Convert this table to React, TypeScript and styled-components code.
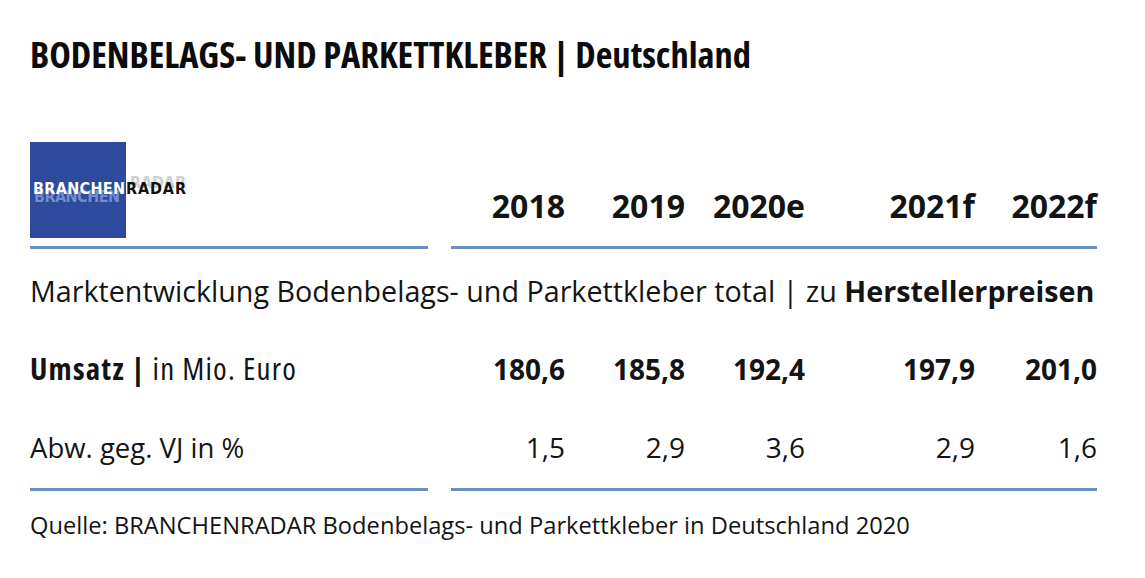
import styled, { createGlobalStyle } from "styled-components";

const GlobalStyle = createGlobalStyle`
  html, body {
    margin: 0;
    padding: 0;
    background: #fff;
  }
  body {
    font-family: "Open Sans", "Liberation Sans", sans-serif;
    font-stretch: condensed;
    color: #141414;
  }
`;

const years = ["2018", "2019", "2020e", "2021f", "2022f"];
const umsatz = ["180,6", "185,8", "192,4", "197,9", "201,0"];
const abw = ["1,5", "2,9", "3,6", "2,9", "1,6"];

const Page = styled.div`
  width: 1145px;
  height: 578px;
  padding: 32px 0 0 30px;
  box-sizing: border-box;
`;

const Title = styled.h1`
  margin: 0;
  font-size: 36.5px;
  font-weight: 700;
  line-height: 44px;
  color: #0c0c0c;
`;

const Table = styled.div`
  margin-top: 66px;
  width: 1070px;
  display: grid;
  grid-template-columns: 415px 120px 120px 120px 170px 122px;
  align-items: baseline;
`;

const LogoCell = styled.div`
  height: 96px;
  align-self: start;
`;

const HeadCell = styled.div`
  align-self: end;
  text-align: right;
  font-size: 32px;
  font-weight: 700;
  font-stretch: normal;
  line-height: 40px;
  padding-bottom: 12px;
`;

const Cell = styled.div<{ $bold?: boolean }>`
  text-align: right;
  font-size: 28px;
  font-weight: ${(p) => (p.$bold ? 700 : 400)};
  font-stretch: normal;
  line-height: 40px;
`;

const Label = styled.div<{ $size: number; $stretch: string; $spacing: number }>`
  font-size: ${(p) => p.$size}px;
  font-stretch: ${(p) => p.$stretch};
  letter-spacing: ${(p) => p.$spacing}px;
  line-height: 40px;
  white-space: nowrap;
  b {
    font-weight: 700;
  }
`;

const Wide = styled.div`
  grid-column: 1 / -1;
  font-size: 28.7px;
  font-stretch: normal;
  line-height: 40px;
  padding-top: 22px;
  white-space: nowrap;
  b {
    font-weight: 700;
  }
`;

const Rule = styled.div<{ $top: number }>`
  grid-column: 1 / -1;
  align-self: start;
  display: flex;
  gap: 23px;
  padding-top: ${(p) => p.$top}px;
`;

const RuleSeg = styled.div<{ $w?: number }>`
  height: 3px;
  background: #6b8fc2;
  flex: ${(p) => (p.$w ? `0 0 ${p.$w}px` : "1")};
`;

const RowGap = styled.div<{ $h: number }>`
  grid-column: 1 / -1;
  height: ${(p) => p.$h}px;
`;

const Source = styled.div`
  margin-top: 19px;
  font-size: 23.7px;
  font-stretch: normal;
  line-height: 30px;
`;

function Logo() {
  return (
    <svg width="170" height="96" viewBox="0 0 170 96">
      <rect x="0" y="0" width="96" height="96" fill="#2d4a9c" />
      <g fontFamily="'DejaVu Sans', sans-serif" fontWeight="700" fontSize="16">
        <text x="100" y="46" fill="#bdbdbd" opacity="0.7" textLength="56">
          RADAR
        </text>
        <text x="4" y="60" fill="#8aa3dc" opacity="0.75" textLength="86">
          BRANCHEN
        </text>
        <text x="3" y="52" fill="#ffffff" textLength="92">
          BRANCHEN
        </text>
        <text x="96" y="52" fill="#111" textLength="60">
          RADAR
        </text>
      </g>
    </svg>
  );
}

export default function App() {
  return (
    <Page>
      <GlobalStyle />
      <Title>BODENBELAGS- UND PARKETTKLEBER | Deutschland</Title>
      <Table>
        <LogoCell>
          <Logo />
        </LogoCell>
        {years.map((y) => (
          <HeadCell key={y}>{y}</HeadCell>
        ))}
        <Rule $top={8}>
          <RuleSeg $w={398} />
          <RuleSeg />
        </Rule>
        <Wide>
          Marktentwicklung Bodenbelags- und Parkettkleber total | zu <b>Herstellerpreisen</b>
        </Wide>
        <RowGap $h={37} />
        <Label $size={31} $stretch="condensed" $spacing={1.2}>
          <b>Umsatz |</b> in Mio. Euro
        </Label>
        {umsatz.map((v, i) => (
          <Cell key={i} $bold>
            {v}
          </Cell>
        ))}
        <RowGap $h={38} />
        <Label $size={27.5} $stretch="normal" $spacing={0}>
          Abw. geg. VJ in %
        </Label>
        {abw.map((v, i) => (
          <Cell key={i}>{v}</Cell>
        ))}
        <Rule $top={20}>
          <RuleSeg $w={398} />
          <RuleSeg />
        </Rule>
      </Table>
      <Source>Quelle: BRANCHENRADAR Bodenbelags- und Parkettkleber in Deutschland 2020</Source>
    </Page>
  );
}
